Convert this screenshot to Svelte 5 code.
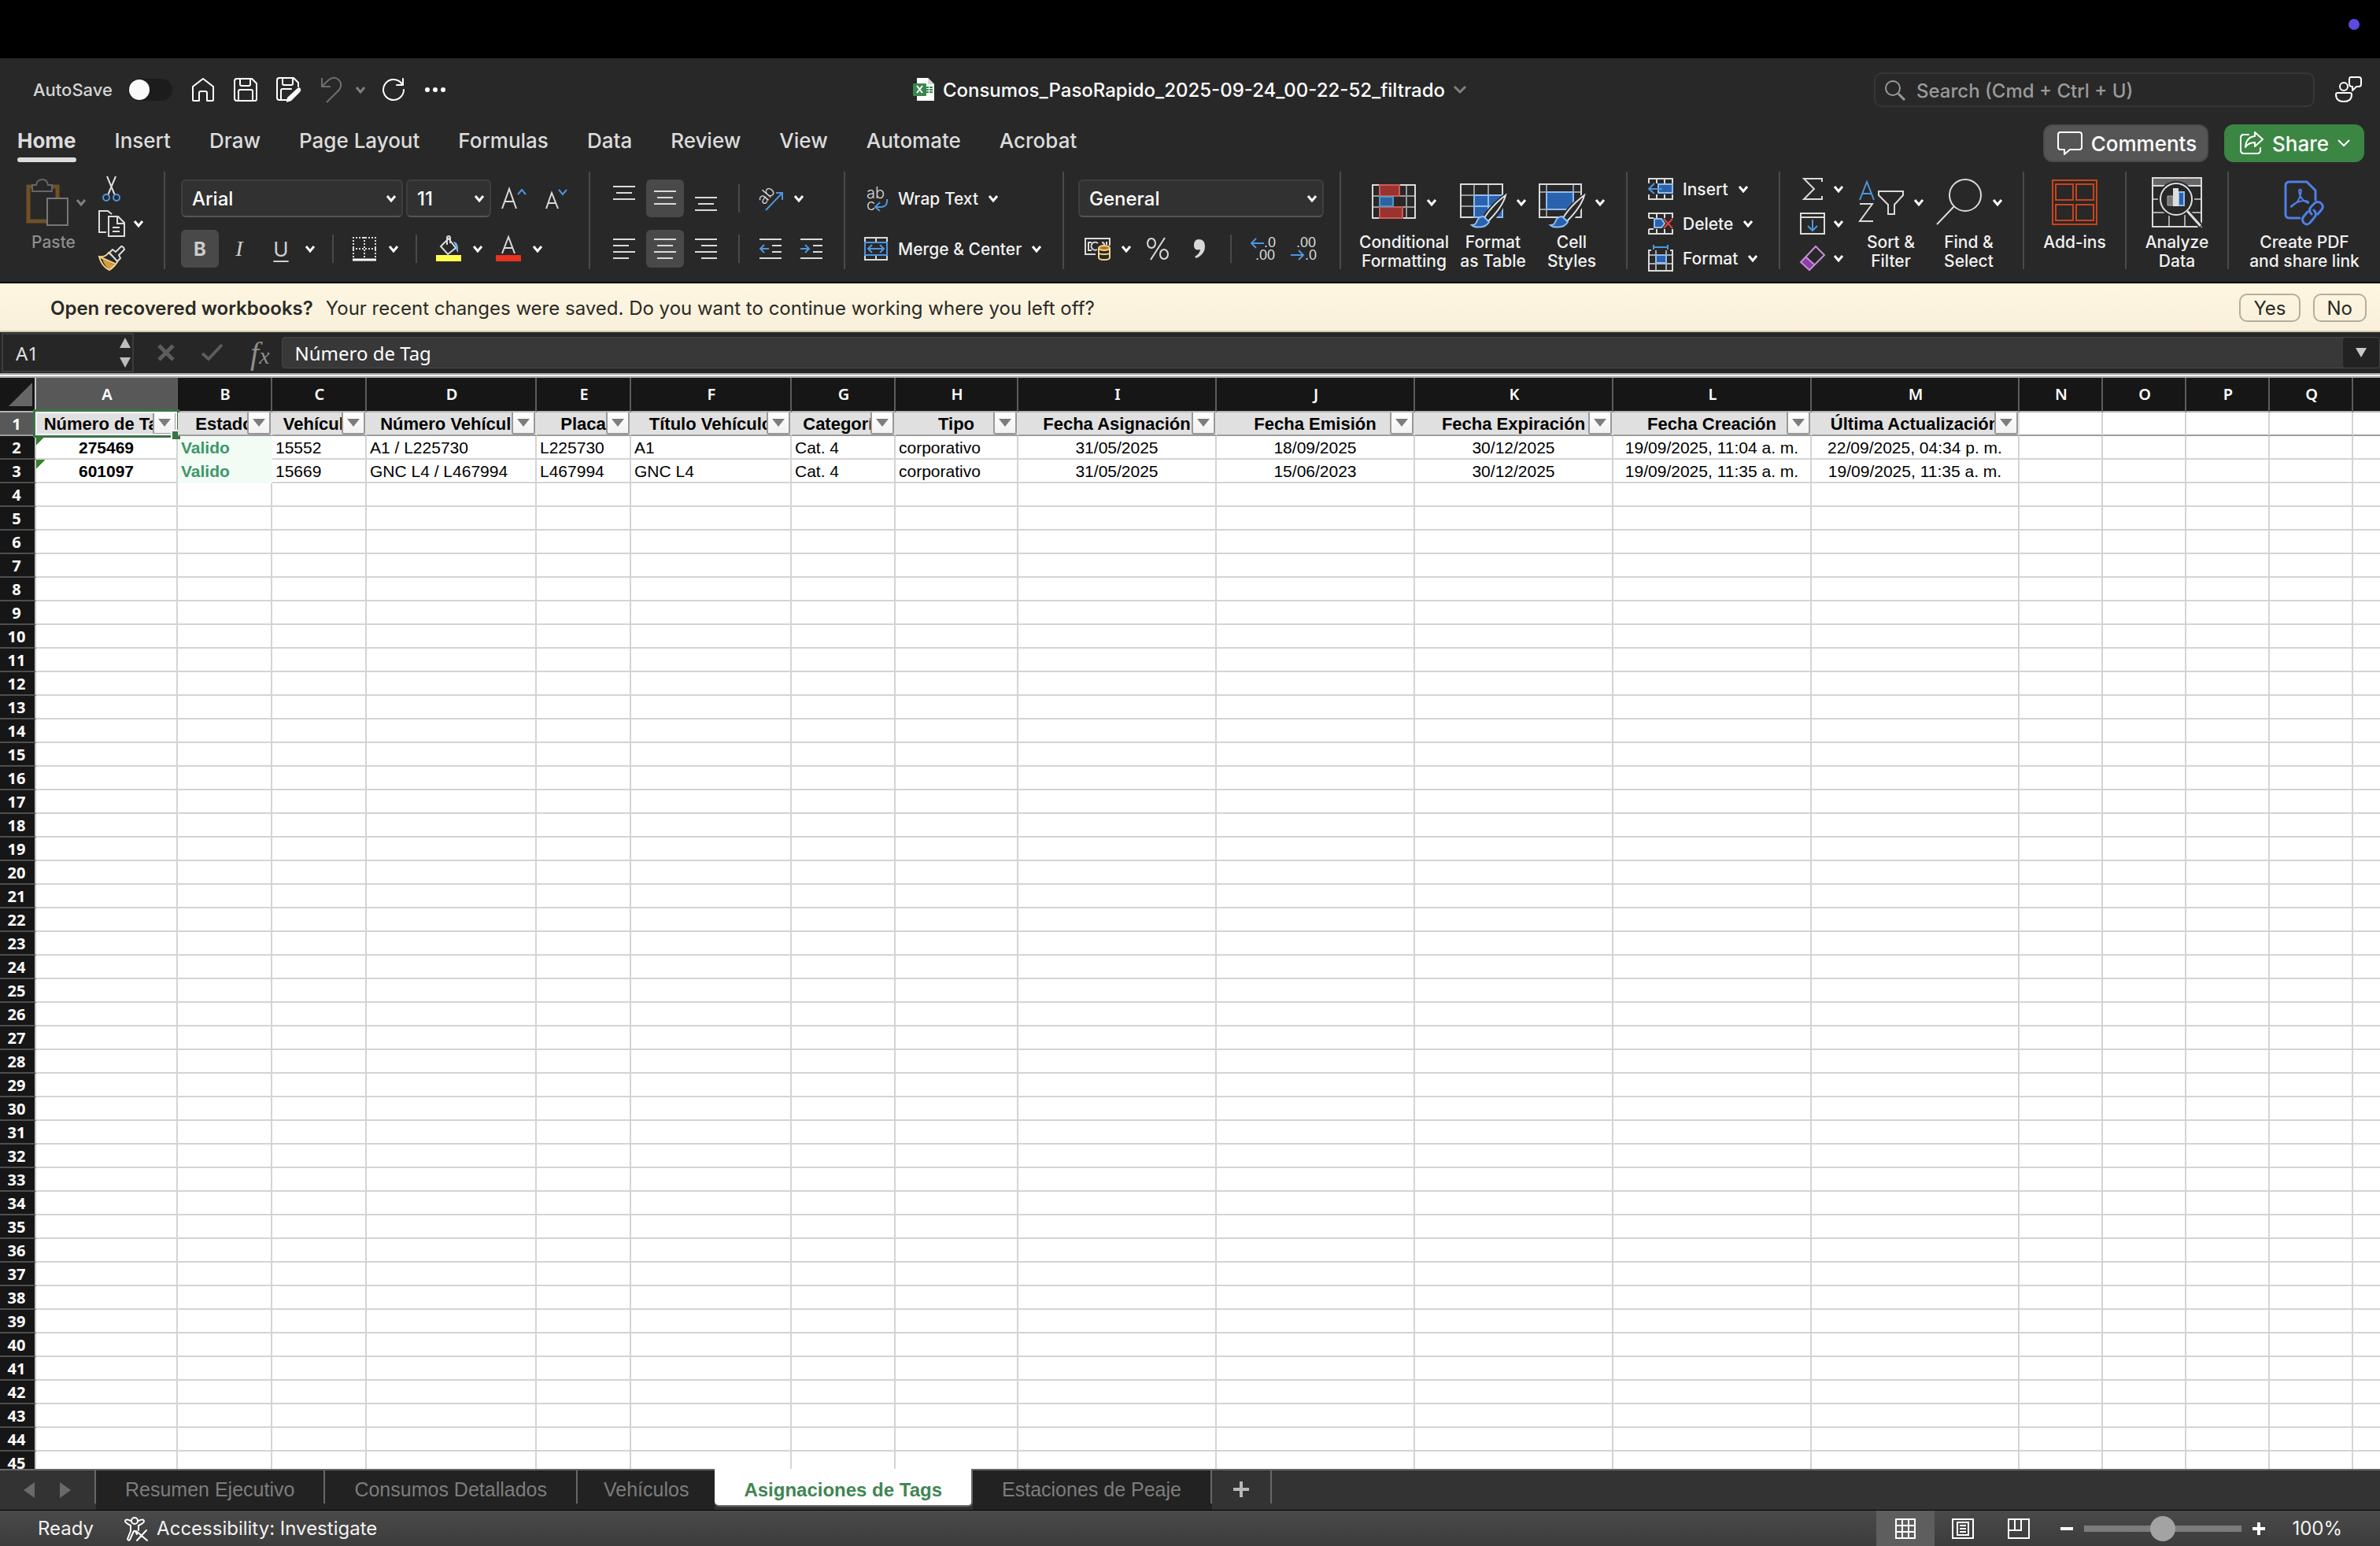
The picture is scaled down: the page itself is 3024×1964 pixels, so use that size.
<script>
  const ribbonTabs = ['Home', 'Insert', 'Draw', 'Page Layout', 'Formulas', 'Data', 'Review', 'View', 'Automate', 'Acrobat'];

  const columns = [
    { id: 'A', w: 180, title: 'Número de Tag' },
    { id: 'B', w: 120, title: 'Estado' },
    { id: 'C', w: 120, title: 'Vehículo' },
    { id: 'D', w: 216, title: 'Número Vehículo' },
    { id: 'E', w: 120, title: 'Placa' },
    { id: 'F', w: 204, title: 'Título Vehículo' },
    { id: 'G', w: 132, title: 'Categoría' },
    { id: 'H', w: 156, title: 'Tipo' },
    { id: 'I', w: 252, title: 'Fecha Asignación' },
    { id: 'J', w: 252, title: 'Fecha Emisión' },
    { id: 'K', w: 252, title: 'Fecha Expiración' },
    { id: 'L', w: 252, title: 'Fecha Creación' },
    { id: 'M', w: 264, title: 'Última Actualización' },
    { id: 'N', w: 106 },
    { id: 'O', w: 106 },
    { id: 'P', w: 106 },
    { id: 'Q', w: 106 },
    { id: '', w: 106 }
  ];
  const centered = new Set(['A', 'I', 'J', 'K', 'L', 'M']);
  const tableWidth = 46 + columns.reduce((sum, c) => sum + c.w, 0);

  const records = [
    ['275469', 'Valido', '15552', 'A1 / L225730', 'L225730', 'A1', 'Cat. 4', 'corporativo', '31/05/2025', '18/09/2025', '30/12/2025', '19/09/2025, 11:04 a. m.', '22/09/2025, 04:34 p. m.'],
    ['601097', 'Valido', '15669', 'GNC L4 / L467994', 'L467994', 'GNC L4', 'Cat. 4', 'corporativo', '31/05/2025', '15/06/2023', '30/12/2025', '19/09/2025, 11:35 a. m.', '19/09/2025, 11:35 a. m.']
  ];
  const emptyRows = Array.from({ length: 42 }, (_, i) => i + 4);

  const sheets = ['Resumen Ejecutivo', 'Consumos Detallados', 'Vehículos', 'Asignaciones de Tags', 'Estaciones de Peaje'];
  let activeSheet = $state('Asignaciones de Tags');
  let zoom = $state(50);
</script>

{#snippet chev(cls = '')}
  <svg class="chev {cls}" viewBox="0 0 14 12" width="14" height="12"><path d="M2 3l5 6 5-6" /></svg>
{/snippet}

{#snippet brush()}
  <path d="M60 21C48 30 38 40 32 50l6 5C46 47 56 34 60 21z" fill="#282828" stroke="#282828" stroke-width="6" />
  <path d="M59 21C48 29 37 41 32 50l5 4C45 46 56 33 59 21z" fill="#282828" stroke="#e0e0e0" stroke-width="2" />
  <path d="M31 48c-6 0-8 4-9 7-1 3-4 4-6 4 3 3 17 5 22-4z" fill="#2a62b0" stroke="#8fbdee" stroke-width="2" />
{/snippet}

<div class="app">
  <div class="menubar"><span class="dot"></span></div>

  <header class="titlebar">
    <div class="quick">
      <label class="autosave"><span>AutoSave</span><input type="checkbox" role="switch" /></label>
      <button aria-label="Home">
        <svg width="30" height="32" viewBox="0 0 30 32"><path class="w" d="M2 12L15 2l13 10v17q0 1-1 1h-7V20q0-2-2-2h-6q-2 0-2 2v10H3q-1 0-1-1z" /></svg>
      </button>
      <button aria-label="Save">
        <svg width="30" height="30" viewBox="0 0 30 30"><path class="w" d="M4 1h19l6 6v20q0 2-2 2H4q-3 0-3-3V4q0-3 3-3zM8 1v7q0 2 2 2h9q2 0 2-2V1M6 29V17q0-2 2-2h14q2 0 2 2v12" /></svg>
      </button>
      <button aria-label="Save as">
        <svg width="32" height="32" viewBox="0 0 32 32"><path class="w" d="M14 29H4q-3 0-3-3V4q0-3 3-3h18l6 6v5M8 1v7q0 2 2 2h9q2 0 2-2V1M6 29V17q0-2 2-2h11" /><path d="M27 14q3-2 4 1 1 2-1 4L19 30l-6 2 1-6z" fill="#fff" /></svg>
      </button>
      <button aria-label="Undo" class="undo">
        <svg width="28" height="34" viewBox="0 0 28 34"><path class="g" d="M2 2v11h11M2 13L10 5q7-6 13-1 6 6 1 13L8 33" /></svg>
      </button>
      <button aria-label="Undo history" class="undo-more">{@render chev('dim')}</button>
      <button aria-label="Redo">
        <svg width="30" height="30" viewBox="0 0 30 30"><path class="w" d="M27 1v8h-8M26 8A13 13 0 1 0 28 15" /></svg>
      </button>
      <button aria-label="More">
        <svg width="28" height="8" viewBox="0 0 28 8"><g fill="#fff"><circle cx="4" cy="4" r="3" /><circle cx="14" cy="4" r="3" /><circle cx="24" cy="4" r="3" /></g></svg>
      </button>
    </div>

    <button class="doc">
      <svg width="28" height="30" viewBox="0 0 28 30"><path d="M5 0h14l8 8v21H5z" fill="#fff" /><path d="M19 0v8h8z" fill="#d5d5d5" /><path d="M17 11h3v2h-3zM21 11h4v2h-4zM17 14h3v2h-3zM21 14h4v2h-4zM17 17h3v2h-3zM21 17h4v2h-4z" fill="#2f8a4c" /><rect y="7" width="17" height="16" rx="1" fill="#3b8650" /><path d="M5 10l7 9M12 10l-7 9" stroke="#fff" stroke-width="2" /></svg>
      <span>Consumos_PasoRapido_2025-09-24_00-22-52_filtrado</span>
      <svg class="chev dim" viewBox="0 0 18 12" width="18" height="12"><path d="M2 2l7 7 7-7" /></svg>
    </button>

    <div class="find">
      <label class="search">
        <svg width="26" height="28" viewBox="0 0 26 28"><circle cx="10" cy="11" r="9" fill="none" stroke="#999" stroke-width="2" /><path d="M17 18l8 8" stroke="#999" stroke-width="3" /></svg>
        <input type="text" placeholder="Search (Cmd + Ctrl + U)" aria-label="Search" />
      </label>
      <button aria-label="People">
        <svg width="34" height="34" viewBox="0 0 34 34"><path class="w" d="M3 21h16q2 0 2 2 0 9-10 9T1 23q0-2 2-2z" /><circle class="w" cx="11" cy="13" r="5" /><path class="w" d="M20 1h10q3 0 3 3v6q0 3-3 3h-3l-5 5v-5q-4 0-4-3V4q0-3 2-3z" /></svg>
      </button>
    </div>
  </header>

  <nav class="tabs">
    <div class="tablist">
      {#each ribbonTabs as tab, i}
        <button class:current={i === 0}>{tab}</button>
      {/each}
    </div>
    <div class="actions">
      <button class="comments">
        <svg width="34" height="32" viewBox="0 0 34 32"><path class="w" d="M5 2h24q3 0 3 3v16q0 3-3 3H17l-7 6v-6H5q-3 0-3-3V5q0-3 3-3z" /></svg>
        <span>Comments</span>
      </button>
      <button class="share">
        <svg width="32" height="30" viewBox="0 0 32 30"><path class="w" d="M12 4H6Q2 4 2 8v16q0 4 4 4h17q4 0 4-4v-3" /><path class="w" d="M20 1l10 9-10 9v-5q-8 0-12 6 1-13 12-14z" /></svg>
        <span>Share</span>
        <svg class="chev thin" viewBox="0 0 18 12" width="18" height="12"><path d="M2 2l7 7 7-7" /></svg>
      </button>
    </div>
  </nav>

  <section class="ribbon" aria-label="Home ribbon">
    <div class="group clipboard">
      <button class="big paste">
        <span class="pic">
          <svg width="56" height="60" viewBox="0 0 56 60"><path d="M10 10H4v44h24M35 10h6v14" fill="none" stroke="#6f5126" stroke-width="5" /><path d="M9 16V8h5q1-7 8-7 6 0 7 7h5v8z" fill="#282828" stroke="#666" stroke-width="2" /><rect x="28" y="25" width="26" height="34" fill="#282828" stroke="#777" stroke-width="2" /></svg>
          {@render chev('dim')}
        </span>
        <span class="cap dimtext">Paste</span>
      </button>
      <div class="stack">
        <button aria-label="Cut"><svg width="34" height="34" viewBox="0 0 34 34"><path d="M11 1l10 24M22 1L12 25" stroke="#ddd" stroke-width="2" fill="none" /><g fill="none" stroke="#4f95dc" stroke-width="2"><circle cx="10" cy="28" r="4" /><circle cx="23" cy="28" r="4" /></g></svg></button>
        <button aria-label="Copy"><svg width="34" height="34" viewBox="0 0 34 34"><g fill="none" stroke="#ddd" stroke-width="2"><path d="M10 28H1V1h11l5 4" /><path d="M13 8h12l8 8v17H13zM24 8v9h9M18 22h9M18 27h9" /></g></svg>{@render chev()}</button>
        <button aria-label="Format painter"><svg width="34" height="32" viewBox="0 0 34 32"><path d="M5 17l17 8-6 6Q8 27 5 17z" fill="#dc9b3b" /><path d="M1 14q8 1 12-5l12 10q-3 6-11 12Q4 26 1 14zm2 1l18 8" fill="none" stroke="#f2d48a" stroke-width="2" /><path d="M14 9l4-4 4 3 7-7q3 0 4 4l-7 7 2 4-4 4z" fill="#282828" stroke="#ddd" stroke-width="2" /></svg></button>
      </div>
    </div>
    <span class="sep"></span>

    <div class="group font rows">
      <div class="row font1">
        <span class="combo"><select aria-label="Font"><option>Arial</option></select>{@render chev()}</span>
        <span class="combo"><select aria-label="Font size"><option>11</option></select>{@render chev()}</span>
        <button aria-label="Increase font size"><svg width="34" height="32" viewBox="0 0 34 32"><path d="M2 29L11 4l9 25M5 20h12" class="l" /><path d="M22 11l5-6 5 6" class="b" /></svg></button>
        <button aria-label="Decrease font size"><svg width="34" height="32" viewBox="0 0 34 32"><path d="M4 29L11 9l8 20M6 22h10" class="l" /><path d="M20 5l5 6 5-6" class="b" /></svg></button>
      </div>
      <div class="row font2">
        <button class="on bold">B</button>
        <button class="italic">I</button>
        <button class="under">U</button>
        <button aria-label="Underline options">{@render chev()}</button>
        <span class="rule"></span>
        <button aria-label="Borders"><svg width="32" height="32" viewBox="0 0 32 32"><path d="M1 2h30M1 16h30M2 1v26M16 1v26M30 1v26" fill="none" stroke="#ddd" stroke-width="2" stroke-dasharray="2 2" /><path d="M1 30h30" stroke="#fff" stroke-width="3" /></svg></button>
        <button aria-label="Border options">{@render chev()}</button>
        <span class="rule"></span>
        <button aria-label="Fill color"><svg width="32" height="34" viewBox="0 0 32 34"><path d="M6 14L16 4l9 12-10 8z" class="l" /><path d="M14 12V3q0-2 2-2t2 2v7" class="l" /><path d="M22 8q7 0 6 14-3-3-3-8z" fill="#78b0ea" /><rect y="25" width="32" height="8" fill="#ffff4d" /></svg></button>
        <button aria-label="Fill options">{@render chev()}</button>
        <button aria-label="Font color"><svg width="32" height="34" viewBox="0 0 32 34"><path d="M8 23l8-21 8 21M11 16h10" class="l" /><rect y="25" width="32" height="8" fill="#e8321f" /></svg></button>
        <button aria-label="Font color options">{@render chev()}</button>
      </div>
    </div>
    <span class="sep"></span>

    <div class="group align rows">
      <div class="row align1">
        <button aria-label="Top align"><svg width="28" height="36" viewBox="0 0 28 36"><path class="l" d="M0 3h28M4 11h20M0 19h28" /></svg></button>
        <button class="on" aria-label="Middle align"><svg width="28" height="36" viewBox="0 0 28 36"><path class="l" d="M0 9h28M4 17h20M0 25h28" /></svg></button>
        <button aria-label="Bottom align"><svg width="28" height="36" viewBox="0 0 28 36"><path class="l" d="M0 17h28M4 25h20M0 33h28" /></svg></button>
        <span class="rule"></span>
        <button aria-label="Orientation"><svg width="34" height="34" viewBox="0 0 34 34"><text class="glyph" transform="translate(9 26) rotate(-50)">ab</text><path class="b" d="M11 32L32 10M24 10h8v9" /></svg></button>
        <button aria-label="Orientation options">{@render chev()}</button>
      </div>
      <div class="row align2">
        <button aria-label="Align left"><svg width="28" height="28" viewBox="0 0 28 28"><path class="l" d="M0 2h28M0 10h20M0 18h28M0 26h20" /></svg></button>
        <button class="on" aria-label="Center"><svg width="28" height="28" viewBox="0 0 28 28"><path class="l" d="M0 2h28M4 10h20M0 18h28M4 26h20" /></svg></button>
        <button aria-label="Align right"><svg width="28" height="28" viewBox="0 0 28 28"><path class="l" d="M0 2h28M8 10h20M0 18h28M8 26h20" /></svg></button>
        <span class="rule"></span>
        <button aria-label="Decrease indent"><svg width="28" height="28" viewBox="0 0 28 28"><path class="l" d="M0 2h28M16 10h12M16 18h12M0 26h28" /><path class="b" d="M12 14H1M6 9l-5 5 5 5" /></svg></button>
        <button aria-label="Increase indent"><svg width="28" height="28" viewBox="0 0 28 28"><path class="l" d="M0 2h28M16 10h12M16 18h12M0 26h28" /><path class="b" d="M0 14h11M6 9l5 5-5 5" /></svg></button>
      </div>
    </div>
    <span class="sep"></span>

    <div class="group wrap rows">
      <button class="row line">
        <svg width="32" height="34" viewBox="0 0 32 34"><text class="glyph" x="4" y="17">ab</text><text class="glyph" x="4" y="32">c</text><path class="b" d="M30 18q1 10-8 10h-6M21 22l-6 6 6 5" /></svg>
        <span>Wrap Text</span>{@render chev()}
      </button>
      <button class="row line">
        <svg width="32" height="32" viewBox="0 0 32 32"><path class="l" d="M2 2h28v28H2zM16 2v28" /><rect x="2" y="8" width="28" height="16" fill="#282828" stroke="#4f95dc" stroke-width="2" /><path class="b" d="M6 16h20M11 11l-5 5 5 5M21 11l5 5-5 5" /></svg>
        <span>Merge &amp; Center</span>{@render chev()}
      </button>
    </div>
    <span class="sep"></span>

    <div class="group number rows">
      <div class="row num1">
        <span class="combo"><select aria-label="Number format"><option>General</option></select>{@render chev()}</span>
      </div>
      <div class="row num2">
        <button aria-label="Currency"><svg width="34" height="30" viewBox="0 0 34 30"><path class="l" d="M14 22H1V2h31v9M9 7H5v10h4M17 8a5 5 0 1 0-1 8M22 7q3 0 3 3M28 6v4" /><path d="M18 14v12q0 3 7 3t7-3V14" fill="#282828" /><g fill="none" stroke="#f2d48a" stroke-width="2"><ellipse cx="25" cy="14" rx="7" ry="3" fill="#b9722a" /><path d="M18 14v12q0 3 7 3t7-3V14M18 20q0 2 7 2t7-2" /></g></svg></button>
        <button aria-label="Currency options">{@render chev()}</button>
        <button aria-label="Percent"><svg width="30" height="30" viewBox="0 0 30 30"><g class="l"><ellipse cx="7" cy="8" rx="5" ry="6" /><ellipse cx="23" cy="22" rx="5" ry="6" /><path d="M24 1L6 29" /></g></svg></button>
        <button aria-label="Comma"><svg width="16" height="28" viewBox="0 0 16 28"><path d="M7 2q8 0 8 9 0 10-11 15l-2-2q6-3 7-9-8 2-8-5 0-8 6-8z" fill="#d8d8d8" /></svg></button>
        <span class="rule"></span>
        <button class="dec" aria-label="Increase decimal"><svg width="32" height="32" viewBox="0 0 32 32"><text x="18" y="14">.0</text><text x="7" y="30">.00</text><path class="b" d="M18 9H2M8 3L2 9l6 6" /></svg></button>
        <button class="dec" aria-label="Decrease decimal"><svg width="32" height="32" viewBox="0 0 32 32"><text x="7" y="14">.00</text><text x="18" y="30">.0</text><path class="b" d="M0 24h16M10 18l6 6-6 6" /></svg></button>
      </div>
    </div>
    <span class="sep"></span>

    <div class="group styles">
      <button class="big">
        <span class="pic"><svg width="58" height="58" viewBox="0 0 58 58"><path d="M1 21h56M1 35h56M11 6v44M45 6v44" stroke="#999" stroke-width="2" /><path class="l" d="M2 7h54v42H2z" /><g stroke-width="2"><path d="M11 7h25v14H11zM11 35h29v14H11z" fill="#9a3330" stroke="#cf5a55" /><path d="M11 22h17v12H11z" fill="#2d639e" stroke="#4b9ac6" /></g></svg>{@render chev()}</span>
        <span class="cap">Conditional<br />Formatting</span>
      </button>
      <button class="big">
        <span class="pic"><svg width="60" height="60" viewBox="0 0 60 60"><path d="M1 21h54M1 35h54M19 6v44M37 6v44" stroke="#999" stroke-width="2" /><path class="l" d="M2 7h53v42H2z" /><path d="M19 21h36v28H19z" fill="#2a62b0" stroke="#8fbdee" stroke-width="2" /><path d="M19 35h36M37 21v28" stroke="#8fbdee" stroke-width="2" />{@render brush()}</svg>{@render chev()}</span>
        <span class="cap">Format<br />as Table</span>
      </button>
      <button class="big">
        <span class="pic"><svg width="60" height="60" viewBox="0 0 60 60"><path d="M1 17h54M1 39h54M11 6v44M45 6v44" stroke="#999" stroke-width="2" /><path class="l" d="M2 7h53v42H2z" /><path d="M11 17h34v22H11z" fill="#2a62b0" stroke="#8fbdee" stroke-width="2" />{@render brush()}</svg>{@render chev()}</span>
        <span class="cap">Cell<br />Styles</span>
      </button>
    </div>
    <span class="sep"></span>

    <div class="group cells">
      <button class="line"><svg width="32" height="32" viewBox="0 0 32 32"><path class="l" d="M1 9V3h30v6M1 23v6h30v-6M11 3v6M21 3v6M11 23v6M21 23v6" /><path d="M13 10h18v11H13z" fill="#2a62b0" stroke="#8fbdee" stroke-width="2" /><path class="b" d="M18 16H1M8 9l-7 7 7 6" /></svg><span>Insert</span>{@render chev()}</button>
      <button class="line"><svg width="32" height="32" viewBox="0 0 32 32"><path class="l" d="M1 9V3h30v6M1 9h6M1 23v6h30v-6M1 23h6M11 3v6M21 3v6M11 23v6M21 23v6" /><path d="M8 10h9l4 6-4 5H8z" fill="#2a62b0" stroke="#8fbdee" stroke-width="2" /><path d="M20 10l11 12M31 10L20 22" stroke="#e0453c" stroke-width="2" /></svg><span>Delete</span>{@render chev()}</button>
      <button class="line"><svg width="32" height="34" viewBox="0 0 32 34"><path d="M1 13h30M1 24h30M10 7v25M23 7v25" stroke="#aaa" stroke-width="2" /><path class="l" d="M4 7H1v26h30V7h-3" /><path d="M10 13h13v10H10z" fill="#2a62b0" stroke="#8fbdee" stroke-width="2" /><path class="b" d="M7 3h18M7 0v6M25 0v6" /></svg><span>Format</span>{@render chev()}</button>
    </div>
    <span class="sep"></span>

    <div class="group editing">
      <div class="stack">
        <button aria-label="AutoSum"><svg width="32" height="30" viewBox="0 0 32 30"><path class="l" d="M28 6V2H5l13 13L5 28h23v-4" /></svg>{@render chev()}</button>
        <button aria-label="Fill"><svg width="32" height="30" viewBox="0 0 32 30"><path class="l" d="M1 2h30v26H1zM1 7h30" /><path class="b" d="M16 10v14M10 18l6 6 6-6" /></svg>{@render chev()}</button>
        <button aria-label="Clear"><svg width="32" height="32" viewBox="0 0 32 32"><path d="M7 14l11 9-6 8L1 21z" fill="#8d3fa5" /><path d="M20 1l11 11-19 19L1 21zM7 14l11 10" fill="none" stroke="#c58fd4" stroke-width="2" /></svg>{@render chev()}</button>
      </div>
      <button class="big">
        <span class="pic"><svg width="58" height="58" viewBox="0 0 58 58"><path class="b" d="M2 26L11 3l9 23M5 18h12" /><path class="l" d="M2 31h16L2 53h17M26 15h31v5L46 32v12h-8V32L26 20z" /></svg>{@render chev()}</span>
        <span class="cap">Sort &amp;<br />Filter</span>
      </button>
      <button class="big">
        <span class="pic"><svg width="60" height="60" viewBox="0 0 60 60"><circle class="l" cx="38" cy="21" r="20" /><path class="l" d="M24 35L2 58" /></svg>{@render chev()}</span>
        <span class="cap">Find &amp;<br />Select</span>
      </button>
    </div>
    <span class="sep"></span>

    <div class="group single">
      <button class="big">
        <span class="pic"><svg width="58" height="58" viewBox="0 0 58 58"><g fill="none" stroke="#c8441c" stroke-width="2"><path d="M1 1h56v56H1zM5 6h22v20H5zM31 6h22v20H31zM5 32h22v20H5zM31 32h22v20H31z" /></g></svg></span>
        <span class="cap">Add-ins</span>
      </button>
    </div>
    <span class="sep"></span>
    <div class="group single">
      <button class="big">
        <span class="pic"><svg width="64" height="64" viewBox="0 0 64 64"><path d="M2 2h60v9H2z" fill="#666" /><path d="M2 28h60M2 45h60M22 45v18M42 45v18" stroke="#aaa" stroke-width="2" /><path class="l" d="M1 1h62v62H1zM1 11h62" /><circle cx="31" cy="28" r="23" fill="#282828" /><circle cx="31" cy="28" r="20" fill="#282828" stroke="#e0e0e0" stroke-width="2" /><path d="M45 43l18 20" stroke="#282828" stroke-width="7" /><path d="M45 43l17 19" stroke="#e0e0e0" stroke-width="3" /><path d="M20 24h7v12h-7z" fill="#777" stroke="#aaa" /><path d="M34 19h7v17h-7z" fill="#2a62b0" stroke="#8fbdee" stroke-width="2" /><path d="M27 14h7v23h-7z" fill="#ddd" /></svg></span>
        <span class="cap">Analyze<br />Data</span>
      </button>
    </div>
    <span class="sep"></span>
    <div class="group pdf">
      <button class="big">
        <span class="pic"><svg width="52" height="60" viewBox="0 0 52 60"><g fill="none" stroke="#4f7fe8" stroke-width="3" stroke-linecap="round" stroke-linejoin="round"><path d="M20 50H7q-5 0-5-5V9q0-5 5-5h22l11 11v12" /><path stroke-width="2" d="M9 35q11-4 13-20-1-3-3 0 1 12 12 16 1-3-5-3-9 0-17 7 0 2 2-1" /><path d="M35 45q-5-5 0-10l4-4q4-3 8 0 4 4 1 8l-5 6M38 40q5 5 0 10l-5 6q-4 4-8 0-3-4 0-8l5-6" /></g></svg></span>
        <span class="cap">Create PDF<br />and share link</span>
      </button>
    </div>
  </section>

  <div class="notice" role="alert">
    <strong>Open recovered workbooks?</strong>
    <span>Your recent changes were saved. Do you want to continue working where you left off?</span>
    <button class="first">Yes</button>
    <button>No</button>
  </div>

  <div class="formula">
    <div class="namebox">
      <input type="text" value="A1" aria-label="Name box" />
      <svg width="14" height="40" viewBox="0 0 14 40"><path d="M7 1l7 13H0zM7 39l7-13H0z" fill="#bdbdbd" /></svg>
    </div>
    <button class="cancel" aria-label="Cancel"><svg width="22" height="22" viewBox="0 0 22 22"><path d="M2 2l18 18M20 2L2 20" stroke="#5c5c5c" stroke-width="5" /></svg></button>
    <button class="enter" aria-label="Enter"><svg width="28" height="22" viewBox="0 0 28 22"><path d="M1 12l8 7L26 1" fill="none" stroke="#5c5c5c" stroke-width="4" /></svg></button>
    <button class="fx" aria-label="Insert function"><i>f</i><i class="x">x</i></button>
    <div class="entry">
      <input type="text" value="Número de Tag" aria-label="Formula" />
      <button aria-label="Expand formula bar"><svg width="14" height="12" viewBox="0 0 14 12"><path d="M0 0h14L7 12z" fill="#c9c9c9" /></svg></button>
    </div>
  </div>
  <div class="divider"></div>

  <main class="grid">
    <table style:width="{tableWidth}px">
      <colgroup>
        <col class="rowcol" />
        {#each columns as c}<col style:width="{c.w}px" />{/each}
      </colgroup>
      <thead>
        <tr>
          <th class="corner"><svg width="30" height="30" viewBox="0 0 30 30"><path d="M30 0v30H0z" fill="#666" /></svg></th>
          {#each columns as c, i}<th class:sel={i === 0}>{c.id}</th>{/each}
        </tr>
      </thead>
      <tbody>
        <tr class="titles">
          <th class="sel">1</th>
          {#each columns as c, i}
            <td class:filled={c.title} class:active={i === 0}>
              {#if c.title}
                <div class="clip">{c.title}</div>
                <button class="filter" aria-label="Filter {c.title}"><svg width="16" height="10" viewBox="0 0 16 10"><path d="M0 0h16L8 10z" fill="#7d7d7d" /></svg></button>
              {/if}
              {#if i === 0}<span class="ring"></span><span class="handle"></span>{/if}
            </td>
          {/each}
        </tr>
        {#each records as record, r}
          <tr>
            <th>{r + 2}</th>
            {#each columns as c, i}
              <td class:mid={centered.has(c.id)} class:tag={i === 0} class:valid={i === 1}>{record[i] ?? ''}</td>
            {/each}
          </tr>
        {/each}
        {#each emptyRows as n}
          <tr><th>{n}</th>{#each columns as c}<td></td>{/each}</tr>
        {/each}
      </tbody>
    </table>
  </main>

  <nav class="sheets">
    <div class="arrows">
      <button aria-label="Previous sheet"><svg width="16" height="20" viewBox="0 0 16 20"><path d="M15 0v20L1 10z" fill="#6a6a6a" /></svg></button>
      <button aria-label="Next sheet"><svg width="16" height="20" viewBox="0 0 16 20"><path d="M1 0v20l14-10z" fill="#6a6a6a" /></svg></button>
    </div>
    {#each sheets as sheet}
      <button class="sheet" class:open={sheet === activeSheet} onclick={() => (activeSheet = sheet)}><span>{sheet}</span></button>
    {/each}
    <button class="add" aria-label="New sheet"><svg width="20" height="20" viewBox="0 0 20 20"><path d="M10 0v20M0 10h20" stroke="#b8b8b8" stroke-width="4" /></svg></button>
  </nav>

  <footer class="status">
    <span>Ready</span>
    <button class="access">
      <svg width="32" height="32" viewBox="0 0 32 32"><circle class="w" cx="14" cy="6" r="4" /><path class="w" d="M9 6Q3 3 2 6q-1 2 7 6v7L5 29q1 3 3 1l5-11h2l2 4M19 6q6-3 7 0 1 2-7 6v6M16 19l14 12M29 18L17 31" /></svg>
      <span>Accessibility: Investigate</span>
    </button>
    <div class="views">
      <button class="on" aria-label="Normal view"><svg width="28" height="28" viewBox="0 0 28 28"><path class="f" d="M2 2h24v24H2zM2 10h24M2 18h24M10 2v24M18 2v24" /></svg></button>
      <button aria-label="Page layout view"><svg width="28" height="28" viewBox="0 0 28 28"><path class="f" d="M1 2h26v24H1zM7 6h14v16H7zM10 10h8M10 14h8M10 18h8" /></svg></button>
      <button aria-label="Page break view"><svg width="28" height="28" viewBox="0 0 28 28"><path class="f" d="M1 2h26v24H1zM9 2v14M17 2v14M1 16h17" /></svg></button>
    </div>
    <button aria-label="Zoom out"><svg width="16" height="16" viewBox="0 0 16 16"><path d="M0 8h16" stroke="#fff" stroke-width="4" /></svg></button>
    <input type="range" min="0" max="100" bind:value={zoom} aria-label="Zoom" />
    <button aria-label="Zoom in"><svg width="16" height="16" viewBox="0 0 16 16"><path d="M0 8h16M8 0v16" stroke="#fff" stroke-width="4" /></svg></button>
    <span class="percent">100%</span>
  </footer>
</div>

<style>
  :global(body) { background: #000; }
  .app {
    display: flex;
    flex-direction: column;
    height: 100vh;
    overflow: hidden;
    background: #282828;
    color: #f2f2f2;
    font-family: Inter, 'Liberation Sans', sans-serif;
    font-size: 21px;
  }
  .app * { box-sizing: border-box; }
  button, input, select {
    font: inherit;
    color: inherit;
    background: none;
    border: 0;
    padding: 0;
    margin: 0;
    outline: none;
  }
  button { display: flex; align-items: center; justify-content: center; white-space: nowrap; }
  svg { display: block; flex: none; overflow: visible; }
  .w { fill: none; stroke: #fff; stroke-width: 2; stroke-linejoin: round; stroke-linecap: round; }
  .g { fill: none; stroke: #6e6e6e; stroke-width: 2; }
  .l { fill: none; stroke: #dadada; stroke-width: 2; }
  .b { fill: none; stroke: #4f95dc; stroke-width: 2; }
  .f { fill: none; stroke: #fff; stroke-width: 2; }
  .glyph { font: 300 20px Inter, sans-serif; fill: #dadada; }
  .chev path { fill: none; stroke: #fff; stroke-width: 3; }
  .chev.dim path { stroke: #808080; }
  .chev.thin path { stroke-width: 2; }

  .menubar { display: flex; justify-content: flex-end; align-items: center; flex: none; height: 74px; padding: 0 26px 12px 0; background: #000; }
  .dot { width: 14px; height: 14px; border-radius: 50%; background: #5b4be0; }

  .titlebar { display: grid; grid-template-columns: 1fr auto 1fr; align-items: center; flex: none; height: 80px; }
  .quick { display: flex; align-items: center; gap: 24px; padding-left: 42px; }
  .autosave { display: flex; align-items: center; gap: 20px; color: #d4d4d4; font-size: 22px; font-weight: 500; }
  .autosave input { appearance: none; width: 56px; height: 28px; border-radius: 14px; background: #1c1c1c; }
  .autosave input::before { content: ''; display: block; width: 26px; height: 26px; margin: 1px; border-radius: 50%; background: #fafafa; }
  .undo-more { margin-left: -8px; margin-right: -4px; }
  .doc { gap: 10px; font-size: 24px; font-weight: 500; color: #fff; }
  .find { display: flex; justify-content: flex-end; align-items: center; gap: 26px; padding-right: 23px; }
  .search { display: flex; align-items: center; gap: 14px; width: 560px; height: 44px; padding: 2px 12px 0; border: 2px solid #363636; border-radius: 10px; }
  .search input { flex: 1; font-size: 24px; font-weight: 500; }
  .search input::placeholder { color: #9a9a9a; opacity: 1; }

  .tabs { display: flex; justify-content: space-between; flex: none; height: 52px; padding: 0 20px 0 22px; }
  .tablist { display: flex; gap: 49px; }
  .tablist button { height: 52px; padding-top: 2px; border-bottom: 6px solid transparent; font-size: 26px; font-weight: 500; color: #dcdcdc; }
  .tablist .current { position: relative; font-weight: 700; }
  .tablist .current::after { content: ''; position: absolute; left: 0; right: 0; bottom: -6px; height: 6px; border-radius: 3px; background: #dcdcdc; }
  .actions { display: flex; gap: 20px; padding-top: 4px; font-size: 26px; font-weight: 500; color: #fff; }
  .actions button { height: 48px; border-radius: 12px; padding: 0 16px 0 18px; gap: 10px; }
  .comments { width: 210px; background: #555; border: 2px solid #4b4b4b; }
  .share { width: 178px; background: #3b8643; }

  .ribbon { display: flex; align-items: flex-start; flex: none; height: 154px; padding-top: 12px; border-bottom: 2px solid #000; }
  .sep { flex: none; width: 2px; height: 124px; background: #4a4a4a; }
  .group { display: flex; flex: none; height: 136px; }
  .rows { flex-direction: column; gap: 16px; padding-top: 10px; }
  .row { height: 48px; }
  .rule { width: 2px; height: 36px; background: #4a4a4a; }
  .on { border-radius: 6px; background: #494949; }
  .big { flex-direction: column; justify-content: flex-start; }
  .pic { display: flex; align-items: center; gap: 12px; height: 78px; }
  .cap { line-height: 24px; font-weight: 500; text-align: center; }
  .dimtext { color: #8e8e8e; }
  .stack { display: flex; flex-direction: column; gap: 8px; padding-top: 4px; }
  .stack button { height: 36px; gap: 10px; justify-content: flex-start; }

  .clipboard { width: 208px; padding-left: 32px; gap: 15px; }
  .paste .pic { gap: 8px; }
  .paste .cap { padding-right: 6px; }

  .font { width: 538px; padding-left: 20px; }
  .font1 { display: grid; grid-template-columns: 282px 108px 50px 50px; gap: 4px; }
  .font2 { display: grid; grid-template-columns: 48px 52px 54px 20px 38px 42px 32px 26px 56px 18px 60px 14px; place-items: center; }
  .font2 .on { width: 48px; height: 48px; }
  .bold { font-size: 24px; font-weight: 700; color: #ccc; }
  .italic { font: italic 28px 'Liberation Serif', serif; color: #d0d0d0; }
  .under { font-size: 26px; color: #d0d0d0; text-decoration: underline; text-underline-offset: 5px; }
  .combo { display: grid; align-items: center; }
  .combo > :global(*) { grid-area: 1 / 1; }
  .combo select { appearance: none; width: 100%; height: 48px; padding-left: 12px; border: 2px solid #3f3f3f; border-bottom-color: #555; border-radius: 6px; background: #313131; font-size: 24px; font-weight: 500; color: #fff; }
  .combo .chev { justify-self: end; margin-right: 8px; pointer-events: none; }

  .align { width: 322px; padding-left: 19px; }
  .align1, .align2 { display: grid; place-items: center; justify-content: start; column-gap: 4px; }
  .align1 { grid-template-columns: 48px 48px 48px 28px 44px 20px; }
  .align2 { grid-template-columns: 48px 48px 48px 28px 44px 52px; }
  .align .on { width: 48px; height: 48px; }

  .line { justify-content: flex-start; gap: 12px; font-weight: 500; }
  .wrap { width: 276px; padding-left: 23px; }
  .number { width: 350px; padding-left: 18px; }
  .num1 { width: 312px; }
  .num2 { display: grid; grid-template-columns: 50px 22px 58px 48px 32px 48px 56px; justify-content: start; place-items: center; }
  .dec text { font: 18px 'Liberation Sans', sans-serif; fill: #d8d8d8; }

  .styles { width: 362px; padding-left: 20px; }
  .styles .big:nth-child(1) { width: 120px; }
  .styles .big:nth-child(2) { width: 106px; }
  .styles .big:nth-child(3) { width: 94px; }
  .cells { width: 192px; flex-direction: column; gap: 8px; padding: 4px 0 0 26px; }
  .cells .line { height: 36px; }
  .editing { width: 308px; padding-left: 25px; }
  .editing .big { width: 99px; }
  .editing .stack { width: 66px; }
  .single { width: 128px; justify-content: center; }
  .pdf { flex: 1; justify-content: center; }

  .notice { display: flex; align-items: center; flex: none; height: 62px; padding: 2px 17px 0 64px; gap: 16px; border-bottom: 2px solid #cfc9b2; background: linear-gradient(#fff6e2, #f8f0da); color: #2a2a26; font-size: 24px; }
  .notice strong { font-weight: 600; }
  .notice button { height: 36px; padding: 0 16px; border: 2px solid #b5ae9b; border-radius: 10px; }
  .notice .first { margin-left: auto; }

  .formula { display: flex; align-items: center; flex: none; height: 52px; padding-left: 2px; background: #262626; font-family: 'Noto Sans', sans-serif; font-size: 24px; }
  .divider { flex: none; height: 6px; background: linear-gradient(#a8a8a8 2px, #f4f4f4 2px 4px, #a8a8a8 4px); }
  .namebox { display: flex; align-items: center; justify-content: space-between; width: 168px; height: 50px; padding: 0 2px 0 16px; border: 2px solid #3c3c3c; }
  .namebox input { width: 100px; color: #e0e0e0; }
  .cancel { margin-left: 30px; }
  .enter { margin-left: 34px; }
  .fx { margin-left: 34px; font: 40px 'Liberation Serif', serif; color: #8e8e8e; }
  .fx .x { font-size: 30px; padding-top: 8px; }
  .entry { display: flex; flex: 1; height: 40px; margin-left: 16px; border: 1px solid #454545; border-radius: 4px; background: #383838; }
  .entry input { flex: 1; padding-left: 15px; color: #fff; }
  .entry button { width: 46px; border-radius: 4px; background: #222; }

  .grid { flex: 1; min-height: 0; overflow: hidden; background: #fff; color: #000; }
  table { table-layout: fixed; border-collapse: separate; border-spacing: 0; font: 21px/26px 'Liberation Sans', Arial, sans-serif; }
  .rowcol { width: 46px; }
  th { height: 30px; padding: 2px 2px 0 0; border-right: 2px solid #c4c4c4; border-bottom: 2px solid #4e4e4e; background: #161616; color: #fff; font-family: 'Noto Sans', sans-serif; font-size: 20px; font-weight: 700; line-height: 26px; }
  thead th { height: 44px; padding: 0 0 0 2px; border-right-color: #5c5c5c; border-bottom-color: #b4b4b4; font-weight: 600; }
  thead .corner { padding-left: 11px; border-right-color: #c4c4c4; }
  th.sel { background: #585858; }
  tbody th.sel { border-right-color: #3a7348; }
  td { height: 30px; padding: 2px 0 0 4px; border-right: 2px solid #d4d4d4; border-bottom: 2px solid #d4d4d4; white-space: nowrap; overflow: hidden; }
  td.mid { padding: 2px 0 0; text-align: center; }
  td.tag { font-weight: 700; background: linear-gradient(135deg, #35822a 8px, transparent 8px) no-repeat; }
  td.valid { border-color: #f2fcf5; background: #f2fcf5; color: #3d9769; font-weight: 700; }
  .titles th, .titles td { border-bottom-color: #9c9c9c; }
  .titles .filled { position: relative; padding: 2px 0 0; border-right-color: #e0e0e0; background: #e0e0e0; font-size: 22px; font-weight: 700; text-align: center; }
  .clip { display: flex; justify-content: center; overflow: hidden; height: 26px; }
  .filter { position: absolute; right: 0; top: 0; width: 30px; height: 28px; border: 2px solid #999; border-top: 0; border-radius: 0 0 3px 3px; background: linear-gradient(#fff, #f2f2f2); }
  .titles .active { overflow: visible; }
  .ring { position: absolute; inset: -4px; border: 3px solid #3a7348; box-shadow: inset 0 0 0 2px #fff; pointer-events: none; }
  .handle { position: absolute; right: -5px; bottom: -6px; width: 12px; height: 12px; border: 2px solid #fff; border-right: 0; border-bottom: 0; background: #3a7348; }

  .sheets { display: flex; flex: none; height: 52px; background: #333; border-top: 2px solid #686868; font-family: 'Liberation Sans', sans-serif; font-size: 25px; }
  .arrows { display: flex; align-items: center; gap: 30px; width: 122px; padding-left: 29px; background: linear-gradient(#686868, #686868) no-repeat right top / 2px 42px; }
  .sheet { align-items: flex-start; background: #222; color: #7d7d7d; }
  .sheet span { height: 42px; padding: 0 37px; line-height: 49px; border-right: 2px solid #686868; }
  .sheet:has(+ .open) span { padding: 0 33px; }
  .sheet.open { margin: -2px 0 0 -2px; background: #333; color: #3f8552; font-size: 24px; font-weight: 700; }
  .sheet.open span { height: 48px; line-height: 53px; background: #fff; border-bottom: 2px solid #686868; border-radius: 0 0 6px 6px; }
  .add { width: 76px; height: 42px; padding-top: 6px; border-right: 2px solid #686868; }

  .status { display: flex; align-items: center; flex: none; height: 46px; padding: 0 48px 0 48px; border-top: 1px solid #000; background: linear-gradient(#4a4a4a, #3c3c3c); font-size: 24px; }
  .access { margin-left: 38px; gap: 10px; }
  .views { display: flex; align-self: stretch; margin-left: auto; margin-right: 18px; }
  .views button { width: 71px; }
  .views .on { width: 74px; border-radius: 0; background: #5e5e5e; }
  .status input { appearance: none; width: 200px; height: 32px; margin: 0 14px; background: linear-gradient(#7c7c7c, #7c7c7c) no-repeat center / 200px 8px; border-radius: 4px; }
  .status input::-webkit-slider-thumb { appearance: none; width: 32px; height: 32px; border-radius: 50%; background: #a3a3a3; }
  .percent { margin-left: 34px; }
</style>
